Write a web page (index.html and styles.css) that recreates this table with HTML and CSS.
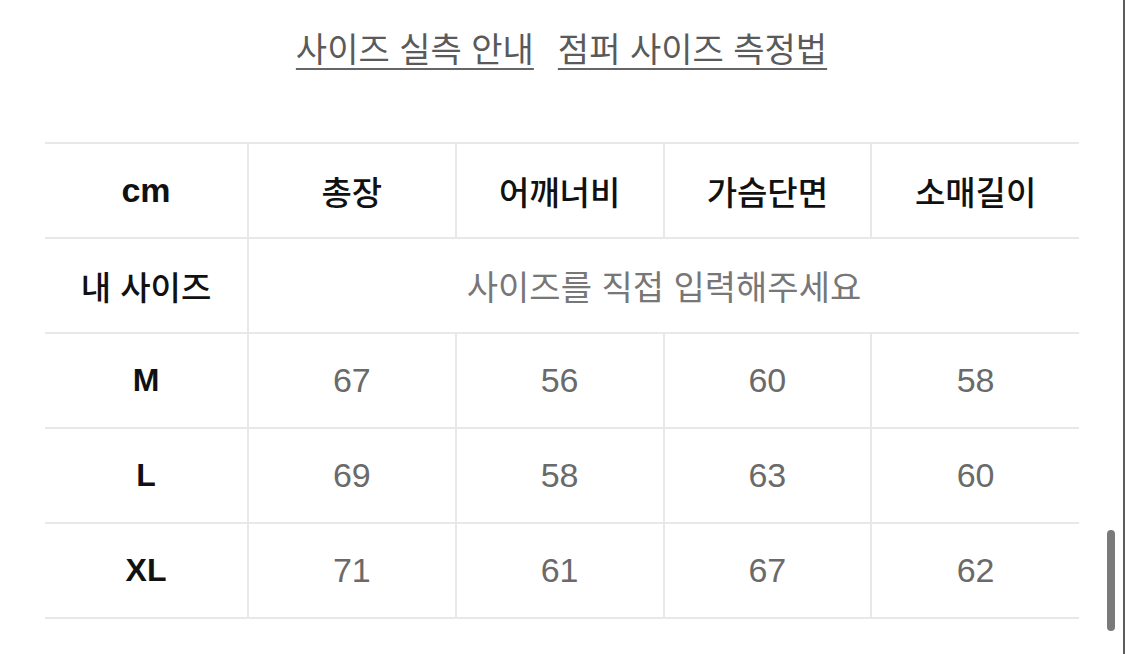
FILE: index.html
```html
<!DOCTYPE html>
<html lang="ko">
<head>
<meta charset="utf-8">
<title>사이즈 실측 안내</title>
<link rel="stylesheet" href="styles.css">
</head>
<body>
<div class="page">
  <main class="content">
    <nav class="links">
      <a href="#" class="link">사이즈 실측 안내</a>
      <a href="#" class="link">점퍼 사이즈 측정법</a>
    </nav>
    <table class="size-table">
      <colgroup>
        <col class="col-label">
        <col><col><col><col>
      </colgroup>
      <tr class="head">
        <th class="unit">cm</th>
        <th class="ko">총장</th>
        <th class="ko">어깨너비</th>
        <th class="ko">가슴단면</th>
        <th class="ko">소매길이</th>
      </tr>
      <tr>
        <th class="ko">내 사이즈</th>
        <td colspan="4" class="placeholder">사이즈를 직접 입력해주세요</td>
      </tr>
      <tr>
        <th>M</th>
        <td>67</td><td>56</td><td>60</td><td>58</td>
      </tr>
      <tr>
        <th>L</th>
        <td>69</td><td>58</td><td>63</td><td>60</td>
      </tr>
      <tr>
        <th>XL</th>
        <td>71</td><td>61</td><td>67</td><td>62</td>
      </tr>
    </table>
  </main>
  <div class="edge"></div>
  <div class="scroll-thumb"></div>
</div>
</body>
</html>
```

FILE: styles.css
```css
html, body {
  margin: 0;
  padding: 0;
  background: #ffffff;
}

body {
  font-family: "Liberation Sans", "Noto Sans CJK KR", sans-serif;
  color: #111111;
}

.page {
  position: relative;
  display: flex;
  width: 1125px;
  height: 654px;
  overflow: hidden;
}

.content {
  flex: 1;
  display: flex;
  flex-direction: column;
  align-items: center;
}

.links {
  display: flex;
  gap: 24px;
  padding-top: 26px;
  height: 142px;
  box-sizing: border-box;
}

.link {
  font-family: "Noto Sans CJK KR", sans-serif;
  font-size: 34px;
  line-height: 44px;
  color: #5a5a5a;
  text-decoration: underline;
  text-decoration-thickness: 2px;
  text-underline-offset: 6px;
  text-decoration-color: #666666;
}

.size-table {
  border-collapse: collapse;
  width: 1034px;
  table-layout: fixed;
  margin-left: 1px;
}

.col-label {
  width: 203px;
}

.size-table th,
.size-table td {
  height: 93px;
  padding: 0;
  text-align: center;
  vertical-align: middle;
  border: 2px solid #e8e8e8;
}

.size-table tr > :first-child {
  border-left: none;
}

.size-table tr > :last-child {
  border-right: none;
}

.size-table th {
  font-size: 32px;
  font-weight: bold;
  color: #111111;
}

.size-table th.unit {
  font-size: 34px;
}

.size-table th.ko {
  font-family: "Noto Sans CJK KR", sans-serif;
  font-size: 33px;
  font-weight: 500;
}

.size-table td {
  font-size: 34px;
  font-weight: normal;
  color: #6a6a6a;
}

.size-table td.placeholder {
  font-family: "Noto Sans CJK KR", sans-serif;
  font-size: 34px;
  color: #777777;
}

.edge {
  width: 2px;
  background: #5c5c5c;
}

.scroll-thumb {
  position: absolute;
  left: 1107px;
  top: 530px;
  width: 8px;
  height: 101px;
  border-radius: 4px;
  background: #7a7a7a;
}
```
